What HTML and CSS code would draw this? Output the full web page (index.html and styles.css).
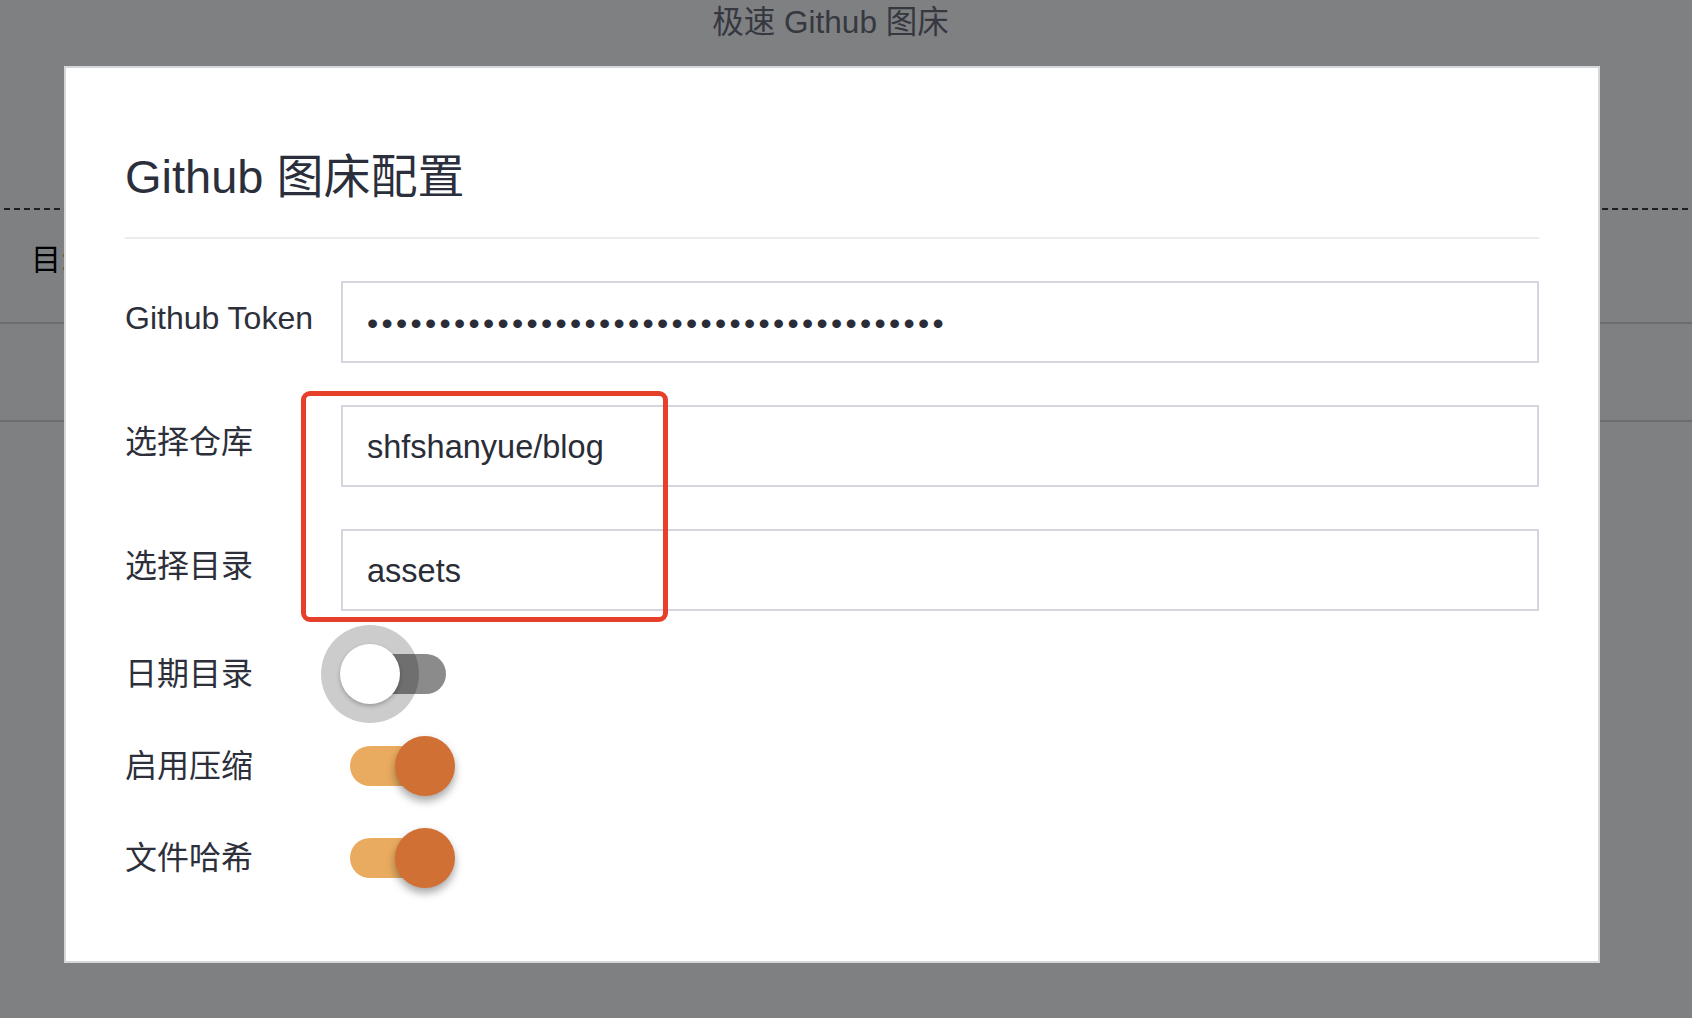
FILE: index.html
```html
<!DOCTYPE html>
<html lang="zh-CN">
<head>
<meta charset="utf-8">
<title>极速 Github 图床</title>
<link rel="stylesheet" href="styles.css">
</head>
<body>
  <header class="page-title">极速 Github 图床</header>
  <section class="drop"></section>
  <div class="dir-line">目:</div>
  <div class="list-rows"></div>

  <div class="overlay"></div>

  <div class="modal" role="dialog">
    <h2 class="modal-title">Github 图床配置</h2>
    <div class="form">
      <div class="field">
        <label class="label">Github Token</label>
        <div class="input"><span class="dots">••••••••••••••••••••••••••••••••••••••••</span></div>
      </div>
      <div class="field">
        <label class="label">选择仓库</label>
        <div class="input">shfshanyue/blog</div>
      </div>
      <div class="field field-last">
        <label class="label">选择目录</label>
        <div class="input">assets</div>
      </div>
      <div class="toggle-row">
        <span class="label label-toggle">日期目录</span>
        <span class="switch focus"><span class="thumb"></span></span>
      </div>
      <div class="toggle-row">
        <span class="label label-toggle">启用压缩</span>
        <span class="switch on"><span class="thumb"></span></span>
      </div>
      <div class="toggle-row">
        <span class="label label-toggle">文件哈希</span>
        <span class="switch on"><span class="thumb"></span></span>
      </div>
      <div class="highlight"></div>
    </div>
  </div>
</body>
</html>
```
FILE: styles.css
```css
html, body {
  margin: 0;
  padding: 0;
}

body {
  background: #ffffff;
  font-family: "Liberation Sans", "Noto Sans CJK SC", sans-serif;
  width: 1692px;
  height: 1018px;
  overflow: hidden;
  position: relative;
}

/* underlying page */
.page-title {
  font-size: 31.5px;
  line-height: 44px;
  text-align: center;
  padding-right: 31px;
  color: #6c6e7a;
}

.drop {
  margin: 164px 4px 0;
  border-top: 2px dashed #3a3a3a;
}

.dir-line {
  margin-top: 30px;
  padding-left: 31px;
  font-size: 30px;
  line-height: 40px;
  color: #000000;
}

.list-rows {
  margin-top: 42px;
  height: 96px;
  border-top: 2px solid #d8d9dd;
  border-bottom: 2px solid #d8d9dd;
}

.overlay {
  position: absolute;
  inset: 0;
  background: rgba(0, 1, 5, 0.5);
}

/* modal */
.modal {
  position: absolute;
  left: 64px;
  top: 66px;
  width: 1536px;
  box-sizing: border-box;
  background: #ffffff;
  border: 2px solid #d6d7da;
  padding: 81px 59px 57px;
  color: #2c303d;
}

.modal-title {
  margin: 0;
  font-size: 47px;
  font-weight: normal;
  line-height: 56px;
  padding-bottom: 32px;
  border-bottom: 2px solid #ececec;
  color: #2b2f3b;
}

.form {
  position: relative;
  margin-top: 42px;
}

.field {
  display: flex;
  align-items: center;
  height: 82px;
  margin-bottom: 42px;
}

.field-last {
  margin-bottom: 17px;
}

.label {
  flex: none;
  width: 216px;
  font-size: 32px;
  line-height: 40px;
  padding-bottom: 8px;
  color: #2d303b;
  white-space: nowrap;
}

.label-toggle {
  padding-bottom: 0;
}

.input {
  flex: 1;
  height: 82px;
  box-sizing: border-box;
  border: 2px solid #d5d5df;
  padding: 3px 24px 0;
  font-size: 32.5px;
  line-height: 75px;
  color: #2a2d38;
  white-space: nowrap;
}

.dots {
  font-size: 32px;
  letter-spacing: 3.3px;
}

.toggle-row {
  display: flex;
  align-items: center;
  height: 92px;
}

.switch {
  position: relative;
  z-index: 0;
  flex: none;
  width: 96px;
  height: 40px;
  margin-left: 9px;
  border-radius: 20px;
  background: #8b8b8b;
}

.switch.on {
  background: #e9ab5f;
}

.thumb {
  position: absolute;
  top: -10px;
  left: -10px;
  width: 60px;
  height: 60px;
  border-radius: 50%;
  background: #ffffff;
  box-shadow: 0 2px 4px rgba(0, 0, 0, 0.25);
}

.switch.on .thumb {
  left: 45px;
  background: #d07034;
  box-shadow: 0 5px 9px rgba(0, 0, 0, 0.35);
}

.switch.focus .thumb::before {
  content: "";
  position: absolute;
  z-index: -1;
  top: -19px;
  left: -19px;
  width: 98px;
  height: 98px;
  border-radius: 50%;
  background: rgba(0, 0, 0, 0.2);
}

.highlight {
  position: absolute;
  left: 176px;
  top: 110px;
  width: 367px;
  height: 231px;
  box-sizing: border-box;
  border: 5px solid #e6402b;
  border-radius: 9px;
}
```
